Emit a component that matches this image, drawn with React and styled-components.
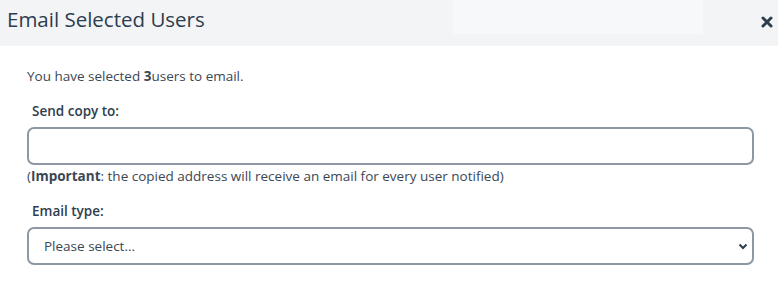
import React from 'react'
import styled, { createGlobalStyle } from 'styled-components'

const GlobalStyle = createGlobalStyle`
  html, body {
    margin: 0;
    padding: 0;
    background: #ffffff;
    font-family: "Open Sans", Lato, sans-serif;
    color: #2f3d4c;
  }
`

const Modal = styled.div`
  width: 778px;
  height: 305px;
  background: #ffffff;
  overflow: hidden;
`

const Header = styled.div`
  position: relative;
  height: 46px;
  background: #f3f4f6;
  display: flex;
  align-items: center;
  justify-content: space-between;
  padding: 0 5px 8px 7px;
  box-sizing: border-box;
`

const Glare = styled.div`
  position: absolute;
  left: 453px;
  top: 0;
  width: 250px;
  height: 34px;
  background: #f7f8f9;
`

const Title = styled.h4`
  position: relative;
  margin: 0;
  font-size: 20.5px;
  font-weight: 400;
  color: #2d3d4f;
`

const Close = styled.button`
  position: relative;
  border: 0;
  background: none;
  padding: 0;
  margin-top: 6px;
  display: flex;
  cursor: pointer;
`

const Body = styled.div`
  padding: 21px 24px 0 27px;
  display: flex;
  flex-direction: column;
  font-size: 13.5px;
  line-height: 18px;
`

const Intro = styled.p`
  margin: 0 0 17px;
  color: #3b4754;
  b { font-weight: 700; }
`

const Label = styled.label`
  display: block;
  margin: 0 0 7px 5px;
  font-weight: 600;
  color: #2f3d4c;
`

const Field = styled.div`
  display: flex;
  flex-direction: column;
  margin-bottom: ${p => p.$gap || 0}px;
`

const Input = styled.input`
  box-sizing: border-box;
  width: 727px;
  height: 38px;
  border: 2px solid #8d98a3;
  border-radius: 7px;
  background: #fff;
  font: inherit;
  outline: none;
`

const Note = styled.div`
  margin-top: 2px;
  color: #3b4754;
  b { font-weight: 700; }
`

const SelectWrap = styled.div`
  position: relative;
  width: 727px;
`

const Select = styled.select`
  box-sizing: border-box;
  width: 100%;
  height: 38px;
  border: 2px solid #8d98a3;
  border-radius: 7px;
  background: #fff;
  padding: 0 15px;
  font-family: inherit;
  font-size: 13.5px;
  color: #3b4754;
  appearance: none;
  outline: none;
`

const Chevron = styled.svg`
  position: absolute;
  right: 6px;
  top: 16px;
  pointer-events: none;
`

export default function App() {
  return (
    <Modal>
      <GlobalStyle />
      <Header>
        <Glare />
        <Title>Email Selected Users</Title>
        <Close aria-label="Close">
          <svg width="12" height="12" viewBox="0 0 12 12">
            <path d="M2 2 L10 10 M10 2 L2 10" stroke="#2d3d4f" strokeWidth="3" strokeLinecap="round" />
          </svg>
        </Close>
      </Header>
      <Body>
        <Intro>You have selected <b>3</b>users to email.</Intro>
        <Field $gap={17}>
          <Label>Send copy to:</Label>
          <Input type="email" />
          <Note>(<b>Important</b>: the copied address will receive an email for every user notified)</Note>
        </Field>
        <Field>
          <Label>Email type:</Label>
          <SelectWrap>
            <Select defaultValue="">
              <option value="">Please select...</option>
            </Select>
            <Chevron width="10" height="7" viewBox="0 0 10 7">
              <path d="M1.5 1.5 L5 5 L8.5 1.5" fill="none" stroke="#2d3d4f" strokeWidth="2" />
            </Chevron>
          </SelectWrap>
        </Field>
      </Body>
    </Modal>
  )
}
